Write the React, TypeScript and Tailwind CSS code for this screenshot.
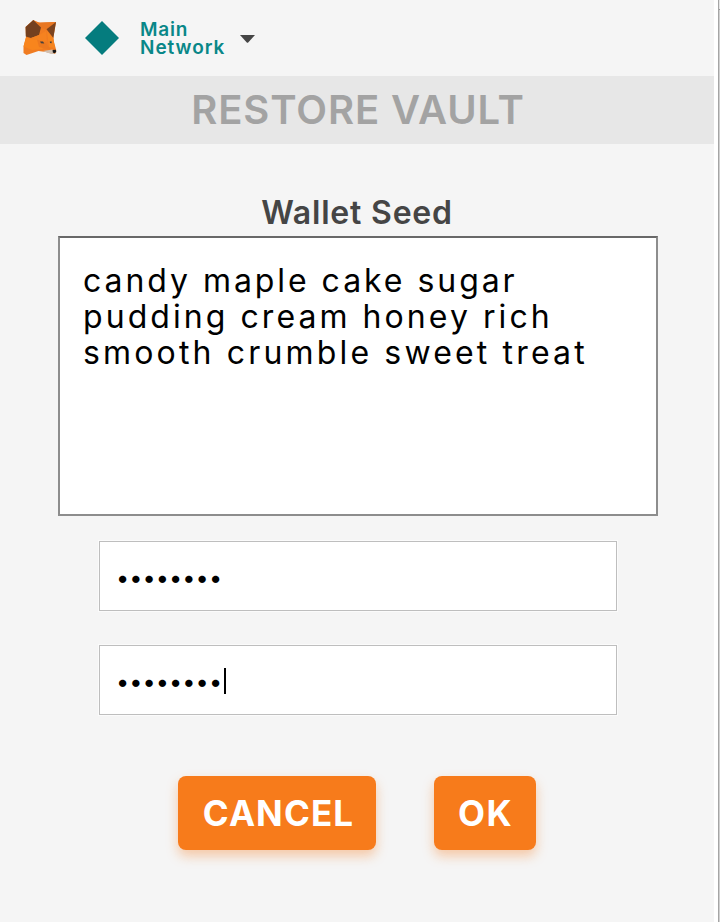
import React from "react";

const seedLines = [
  { text: "candy maple cake sugar", tracking: "tracking-[2.95px]" },
  { text: "pudding cream honey rich", tracking: "tracking-[3.06px]" },
  { text: "smooth crumble sweet treat", tracking: "tracking-[3.16px]" },
];

function FoxLogo() {
  return (
    <svg className="block" width="36" height="38" viewBox="0 0 36 38">
      <path d="M11.3 1 L18 4 L34 3 L31.5 18 L32 23 L34.3 31.5 L33.5 34.5 L31 35 L24 33 L16.5 32 L4.5 36 L1.5 34 L1.5 27.5 L4 18 L3.5 8Z" fill="#f07c21" />
      <path d="M15 3.5 L34 3 L24.7 10.3 L19 9Z" fill="#e87722" />
      <path d="M11.3 1 L19 8.5 L17 16 L9 19 L3.8 17.5 L3.6 8Z" fill="#74401f" />
      <path d="M34 3 L24.5 10.3 L31.3 19Z" fill="#7b431e" />
      <path d="M17 16 L24 12 L25 23 L14 21 L9 19Z" fill="#f58220" />
      <path d="M4 18.5 L15 21 L21 30 L10 31 L1.5 27.5Z" fill="#f8851d" />
      <path d="M15 20.5 L24 24 L29 31 L17 28Z" fill="#ec791f" />
      <path d="M25 12 L31 19 L33 29 L27 28Z" fill="#f5851f" />
      <path d="M18 22.5 L21 22.5 L22.3 24.5 L19 24.3Z M27.8 22.5 L29.8 22.5 L29.5 24.2 L28 24Z" fill="#46413e" />
      <path d="M21 32 L30.5 30.5 L32 35 L29.5 35 L24 33.3Z" fill="#d0c0b2" />
      <path d="M30.6 31 L33.8 30.8 L34.3 33 L32.5 34.2 L30.8 33.4Z" fill="#161616" />
    </svg>
  );
}

function PasswordField({ focused = false, className = "" }: { focused?: boolean; className?: string }) {
  return (
    <div className={`ml-0.5 flex h-[70px] w-[518px] items-center border border-[#bebebe] bg-white pl-[16px] shadow-[0_0_0_1px_#fbfbfb] ${className}`}>
      <span className="flex h-[26px] w-[108px] items-center pt-[4px] text-[23.5px] tracking-[0.05px] text-black">••••••••</span>
      {focused && <span className="mt-[2px] h-[26px] w-[2px] bg-black" />}
    </div>
  );
}

function ActionButton({ label, className }: { label: string; className: string }) {
  return (
    <button className={`h-[74px] rounded-lg bg-[#f77b1b] text-[35px] leading-[74px] font-bold text-white shadow-[0_6px_12px_rgba(247,123,27,0.36)] ${className}`}>
      {label}
    </button>
  );
}

export default function App() {
  return (
    <div className="flex h-[922px] w-[720px] overflow-hidden bg-white font-['Inter',sans-serif]">
      <main className="flex w-[714px] shrink-0 flex-col items-center bg-[#f5f5f5]">
        <header className="flex h-[76px] w-full items-center pl-[22px]">
          <FoxLogo />
          <svg className="ml-[27px] block" width="34" height="34" viewBox="0 0 34 34">
            <path d="M17 0 L34 17 L17 34 L0 17Z" fill="#057c7e" />
          </svg>
          <div className="mt-[2px] ml-[21px] w-[86px] text-[19px] leading-[18px] font-semibold text-[#098788]">
            <div className="tracking-[0.8px]">Main</div>
            <div className="tracking-[0.95px]">Network</div>
          </div>
          <svg className="mt-[2px] ml-[14px] block" width="15" height="8" viewBox="0 0 15 8">
            <path d="M0 0H15L8.2 7.6Q7.5 8 6.8 7.6Z" fill="#454545" />
          </svg>
        </header>
        <h1 className="h-[68px] w-full bg-[#e7e7e7] pl-[2px] text-center text-[40px] leading-[68px] font-semibold tracking-[0.9px] text-[#a3a3a3]">
          RESTORE VAULT
        </h1>
        <h2 className="mt-[48px] h-[44px] text-[32px] leading-[42px] font-semibold tracking-[0.8px] text-[#454545]">Wallet Seed</h2>
        <div className="ml-0.5 h-[280px] w-[600px] border-2 border-[#8d8d8d] border-t-[#686868] bg-white pt-[25px] pl-[23px] text-[32px] leading-9 text-black">
          {seedLines.map((line) => (
            <div key={line.text} className={`whitespace-nowrap ${line.tracking}`}>{line.text}</div>
          ))}
        </div>
        <PasswordField className="mt-[25px]" />
        <PasswordField className="mt-[34px]" focused />
        <div className="mt-[61px] flex gap-[58px]">
          <ActionButton label="CANCEL" className="w-[198px] pl-[3px] tracking-[1.1px]" />
          <ActionButton label="OK" className="w-[102px] pl-px tracking-[1.5px]" />
        </div>
      </main>
      <div className="w-[4px] shrink-0 bg-white" />
      <div className="w-[2px] shrink-0 border-l border-[#a5a5a5] bg-[#d0d0d0]">
        <div className="h-[10px] border-b border-[#999999] bg-[#e5e5e5]" />
      </div>
    </div>
  );
}
